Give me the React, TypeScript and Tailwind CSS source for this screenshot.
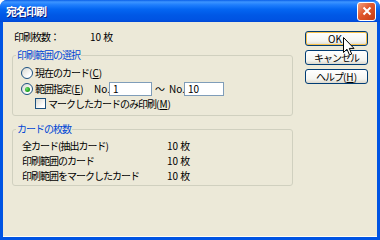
import type { ReactNode } from 'react';

function Radio({ checked }: { checked?: boolean }) {
  return (
    <span className="w-[12px] h-[12px] shrink-0 rounded-full border border-[#1c5180] bg-[linear-gradient(135deg,#d8d8d0,#ffffff_75%)] flex items-center justify-center">
      {checked && <span className="w-[5px] h-[5px] rounded-full bg-[radial-gradient(circle_at_35%_35%,#6fe06f,#21a121_60%)]" />}
    </span>
  );
}

function Check() {
  return (
    <span className="w-[11px] h-[11px] shrink-0 border border-[#1c5180] bg-[linear-gradient(135deg,#d8d8d0,#ffffff_75%)]" />
  );
}

function Group({ title, children, className }: { title: string; children: ReactNode; className?: string }) {
  return (
    <fieldset className={`border border-[#d0d0bf] rounded-[3px] m-0 p-0 min-w-0 ${className ?? ''}`}>
      <legend className="ml-[3px] px-[1px] text-[#0046d5] h-[12px] leading-[12px]">{title}</legend>
      {children}
    </fieldset>
  );
}

function XpButton({ children, hover }: { children: ReactNode; hover?: boolean }) {
  return (
    <div
      className={`h-[15px] w-[63px] rounded-[3px] border border-[#003c74] bg-[linear-gradient(to_bottom,#ffffff,#f5f5f1_70%,#dcd8cc)] flex items-center justify-center ${
        hover ? 'shadow-[inset_0_0_0_1px_#f7c04a]' : ''
      }`}
    >
      {children}
    </div>
  );
}

// underlined access key, e.g. (C)
function Key({ k }: { k: string }) {
  return (
    <span className="tracking-normal">
      (<u>{k}</u>)
    </span>
  );
}

function Cursor() {
  return (
    <svg className="absolute left-[343px] top-[37px]" width="12" height="19" viewBox="0 0 12 19">
      <path d="M0.5 0.5 L0.5 15.5 L4 12.2 L6.5 18 L8.7 17 L6.3 11.4 L11 11.4 Z" fill="#fff" stroke="#000" strokeWidth="1" strokeLinejoin="miter" />
    </svg>
  );
}

export default function App() {
  return (
    <div className="relative w-[380px] h-[240px] flex flex-col overflow-hidden rounded-t-[7px] bg-[#0054e3] font-['Noto_Sans_CJK_JP',sans-serif] text-[10px] leading-[12px] tracking-[-1px] text-black">
      <div className="h-[22px] shrink-0 flex items-center justify-between pl-[6px] pr-[4px] bg-[linear-gradient(to_bottom,#0a5fe8_0%,#3d95ff_9%,#1f7efc_22%,#0466f2_42%,#0058e6_68%,#0054e3_88%,#0048d6_100%)]">
        <span className="text-white font-bold text-[11px] [text-shadow:1px_1px_0_#0a1f80]">宛名印刷</span>
        <div className="w-[19px] h-[19px] rounded-[3px] border border-white bg-[linear-gradient(135deg,#f0a080,#e0582c_45%,#c43a12)] flex items-center justify-center">
          <svg width="10" height="10" viewBox="0 0 10 10">
            <path d="M1.5 1.5 L8.5 8.5 M8.5 1.5 L1.5 8.5" stroke="#fff" strokeWidth="2" />
          </svg>
        </div>
      </div>
      <div className="flex-1 mx-[3px] mb-[3px] bg-[#ece9d8] flex pt-[9px] pl-[9px] border-b border-[#fffef5]">
        <div className="w-[281px] flex flex-col">
          <div className="flex h-[12px] pl-[2px]">
            <span className="w-[76px]">印刷枚数：</span>
            <span className="tracking-normal">10 枚</span>
          </div>

          <Group title="印刷範囲の選択" className="mt-[6px] pb-[5px]">
            <div className="flex items-center h-[13px] mt-[5px] pl-[8px]">
              <Radio />
              <span className="ml-[2px]">
                現在のカード<Key k="C" />
              </span>
            </div>
            <div className="flex items-center h-[14px] mt-[3px] pl-[8px]">
              <Radio checked />
              <span className="ml-[2px] w-[59px]">
                範囲指定<Key k="E" />
              </span>
              <span className="w-[15px] tracking-normal">No.</span>
              <div className="w-[43px] h-[14px] border border-[#7f9db9] bg-white pl-[3px] leading-[12px]">1</div>
              <span className="w-[17px] pl-[3px]">～</span>
              <span className="w-[15px] tracking-normal">No.</span>
              <div className="w-[40px] h-[14px] border border-[#7f9db9] bg-white pl-[3px] leading-[12px] tracking-normal">10</div>
            </div>
            <div className="flex items-center h-[13px] mt-[1px] pl-[22px]">
              <Check />
              <span className="ml-[2px]">
                マークしたカードのみ印刷<Key k="M" />
              </span>
            </div>
          </Group>

          <Group title="カードの枚数" className="mt-[7px] pb-[3px]">
            {[
              ['全カード(抽出カード)', '10 枚'],
              ['印刷範囲のカード', '10 枚'],
              ['印刷範囲をマークしたカード', '10 枚'],
            ].map(([label, value], i) => (
              <div key={label} className={`flex h-[12px] pl-[9px] ${i === 0 ? 'mt-[5px]' : 'mt-[3px]'}`}>
                <span className="w-[145px]">{label}</span>
                <span className="tracking-normal">{value}</span>
              </div>
            ))}
          </Group>
        </div>

        <div className="ml-[12px] flex flex-col gap-[4px]">
          <XpButton hover>
            <span className="pr-[3px] tracking-normal">OK</span>
          </XpButton>
          <XpButton>キャンセル</XpButton>
          <XpButton>
            <span>
              ヘルプ<Key k="H" />
            </span>
          </XpButton>
        </div>
      </div>
      <Cursor />
    </div>
  );
}
